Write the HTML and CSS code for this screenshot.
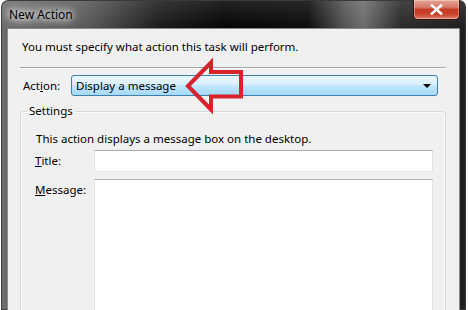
FILE: index.html
```html
<!DOCTYPE html>
<html lang="en">
<head>
  <meta charset="UTF-8" />
  <title>New Action</title>
  <link rel="stylesheet" href="styles.css">
</head>
<body>
  <div class="window">
    <div class="titlebar">
      <div class="title">New Action</div>
      <div class="close">
        <svg width="13" height="11" viewBox="0 0 13 11">
          <path d="M2 1.5 L11 9.5 M11 1.5 L2 9.5" stroke="#fff" stroke-width="2.6" stroke-linecap="square" fill="none"/>
        </svg>
      </div>
    </div>
    <div class="client">
      <p class="intro">You must specify what action this task will perform.</p>
      <div class="separator"></div>
      <div class="action-row">
        <span class="action-label">Act<u>i</u>on:</span>
        <div class="combo">
          <span>Display a message</span>
          <span class="combo-arrow"></span>
        </div>
      </div>
      <fieldset class="settings">
        <legend>Settings</legend>
        <p class="desc">This action displays a message box on the desktop.</p>
        <div class="field">
          <label class="field-label"><u>T</u>itle:</label>
          <div class="textbox"></div>
        </div>
        <div class="field field-top">
          <label class="field-label"><u>M</u>essage:</label>
          <div class="textbox textarea"></div>
        </div>
      </fieldset>
    </div>
  </div>

  <svg class="callout" width="66" height="60" viewBox="0 0 66 60">
    <path d="M5 28 L28 4.5 L28 14 L58 14 L58 38.5 L28 38.5 L28 51.5 Z" fill="none" stroke="#d7232c" stroke-width="4" stroke-linejoin="miter"/>
  </svg>
</body>
</html>
```

FILE: styles.css
```css
body {
  margin: 0;
  background: #fff;
  height: 310px;
  overflow: hidden;
  font-family: 'Noto Sans', 'Open Sans', sans-serif;
  font-size: 11.5px;
  color: #000;
}

.window {
  margin-left: 1px;
  width: 465px;
  height: 310px;
  display: flex;
  flex-direction: column;
  border-radius: 7px 7px 0 0;
  background:
    linear-gradient(180deg, rgba(255,255,255,0.12) 0, rgba(255,255,255,0) 28px),
    linear-gradient(90deg, #6c6c6c 0%, #5a5a5a 18%, #1c1c1c 34%, #050505 48%, #0c0c0c 66%, #555 74%, #6c6c6c 78%, #2a2a2a 86%, #1e1e1e 100%);
  box-shadow: inset 0 0 0 1px #3a3a3a;
}

.titlebar {
  height: 28px;
  display: flex;
  justify-content: space-between;
  align-items: flex-start;
}

.title {
  padding: 7px 0 0 8px;
  font-size: 12px;
  line-height: 16px;
  text-shadow: 0 0 6px #fff, 0 0 10px #fff, 0 0 14px #fff;
}

.close {
  width: 47px;
  height: 20px;
  margin-right: 6px;
  box-sizing: border-box;
  border: 1px solid #3b1410;
  border-top: none;
  border-radius: 0 0 5px 5px;
  background: linear-gradient(180deg, #e7a597 0%, #d57563 40%, #c43b22 50%, #c8432a 75%, #e0806a 100%);
  box-shadow: inset 0 0 0 1px rgba(255,255,255,0.35);
  display: flex;
  justify-content: center;
  align-items: center;
}

.client {
  flex: 1;
  min-height: 0;
  overflow: hidden;
  margin: 0 6px;
  background: #f0f0f0;
  border: 1px solid #8a8a8a;
  border-bottom: none;
  padding: 0 13px 0 12px;
}

.intro {
  margin: 10px 0 0 2px;
  line-height: 16px;
}

.separator {
  margin-top: 12px;
  border-top: 1px solid #a6a6a6;
  border-bottom: 1px solid #fff;
}

.action-row {
  margin-top: 6px;
  display: flex;
  align-items: center;
  height: 21px;
}

.action-label {
  margin-left: 3px;
  width: 48px;
}

.combo {
  width: 367px;
  height: 21px;
  box-sizing: border-box;
  border: 1px solid #3c7fb1;
  border-radius: 3px;
  background: linear-gradient(180deg, #eaf6fd 0%, #d9f0fc 45%, #bee6fd 52%, #a7d9f5 100%);
  display: flex;
  align-items: center;
  justify-content: space-between;
  padding: 0 6px 0 4px;
  line-height: 16px;
}

.combo-arrow {
  width: 0;
  height: 0;
  border-left: 4px solid transparent;
  border-right: 4px solid transparent;
  border-top: 4px solid #000;
}

.settings {
  margin: 7px 0 0;
  border: 1px solid #d5d9dd;
  border-radius: 3px;
  padding: 12px 11px 0 15px;
  box-shadow: inset 0 0 0 1px #fbfbfb;
}

.settings legend {
  margin-left: -9px;
  padding: 0 2px;
  line-height: 16px;
}

.desc {
  margin: 0;
  line-height: 16px;
}

.field {
  margin-top: 3px;
  display: flex;
  align-items: center;
}

.field-top {
  margin-top: 7px;
  align-items: flex-start;
}

.field-label {
  width: 59px;
  margin-left: -1px;
  line-height: 16px;
}

.field-top .field-label {
  padding-top: 3px;
}

.textbox {
  width: 339px;
  height: 22px;
  box-sizing: border-box;
  background: #fff;
  border: 1px solid #e2e3ea;
  border-top-color: #abadb3;
  border-bottom-color: #e3e9ef;
}

.textarea {
  height: 150px;
}

.callout {
  position: absolute;
  left: 183px;
  top: 58px;
}
```
